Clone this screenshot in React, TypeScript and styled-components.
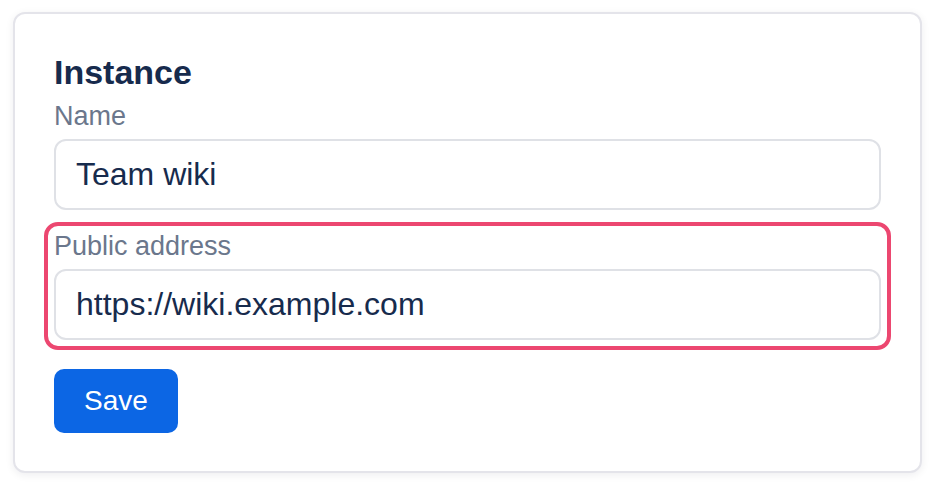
import React from "react";
import styled, { createGlobalStyle } from "styled-components";

const GlobalStyle = createGlobalStyle`
  html, body {
    margin: 0;
    padding: 0;
    background: #ffffff;
  }
  * {
    box-sizing: border-box;
  }
  body {
    font-family: "Liberation Sans", Arial, sans-serif;
  }
`;

const Page = styled.div`
  padding: 12px 14px 12px 13px;
`;

const Card = styled.div`
  background: #ffffff;
  border: 2px solid #e4e4ea;
  border-radius: 12px;
  box-shadow: 0 2px 8px rgba(20, 20, 40, 0.07);
  padding: 38px 39px;
`;

const Title = styled.h2`
  margin: 0 0 10px;
  font-size: 34px;
  line-height: 40px;
  font-weight: 700;
  color: #172b4d;
`;

const Form = styled.form`
  display: flex;
  flex-direction: column;
  gap: 22px;
`;

const Field = styled.div<{ $highlight?: boolean }>`
  display: flex;
  flex-direction: column;
  gap: 9px;
  border-radius: 4px;
  outline: ${(p) => (p.$highlight ? "4px solid #ec4770" : "none")};
  outline-offset: 6px;
`;

const Label = styled.label`
  font-size: 27px;
  line-height: 28px;
  color: #6b778c;
`;

const TextInput = styled.input`
  height: 71px;
  width: 100%;
  padding: 0 20px;
  border: 2px solid #dfe1e6;
  border-radius: 12px;
  background: #ffffff;
  font-family: "Liberation Sans", Arial, sans-serif;
  font-size: 32px;
  color: #172b4d;
  outline: none;
`;

const Actions = styled.div`
  display: flex;
  margin-top: 7px;
`;

const SaveButton = styled.button`
  height: 64px;
  padding: 0 30px;
  border: none;
  border-radius: 10px;
  background: #0c66e4;
  color: #ffffff;
  font-family: "Liberation Sans", Arial, sans-serif;
  font-size: 28px;
  cursor: pointer;
`;

export default function App() {
  return (
    <>
      <GlobalStyle />
      <Page>
        <Card>
          <Title>Instance</Title>
          <Form onSubmit={(e) => e.preventDefault()}>
            <Field>
              <Label htmlFor="name">Name</Label>
              <TextInput id="name" defaultValue="Team wiki" />
            </Field>
            <Field $highlight>
              <Label htmlFor="address">Public address</Label>
              <TextInput id="address" defaultValue="https://wiki.example.com" />
            </Field>
            <Actions>
              <SaveButton type="submit">Save</SaveButton>
            </Actions>
          </Form>
        </Card>
      </Page>
    </>
  );
}
